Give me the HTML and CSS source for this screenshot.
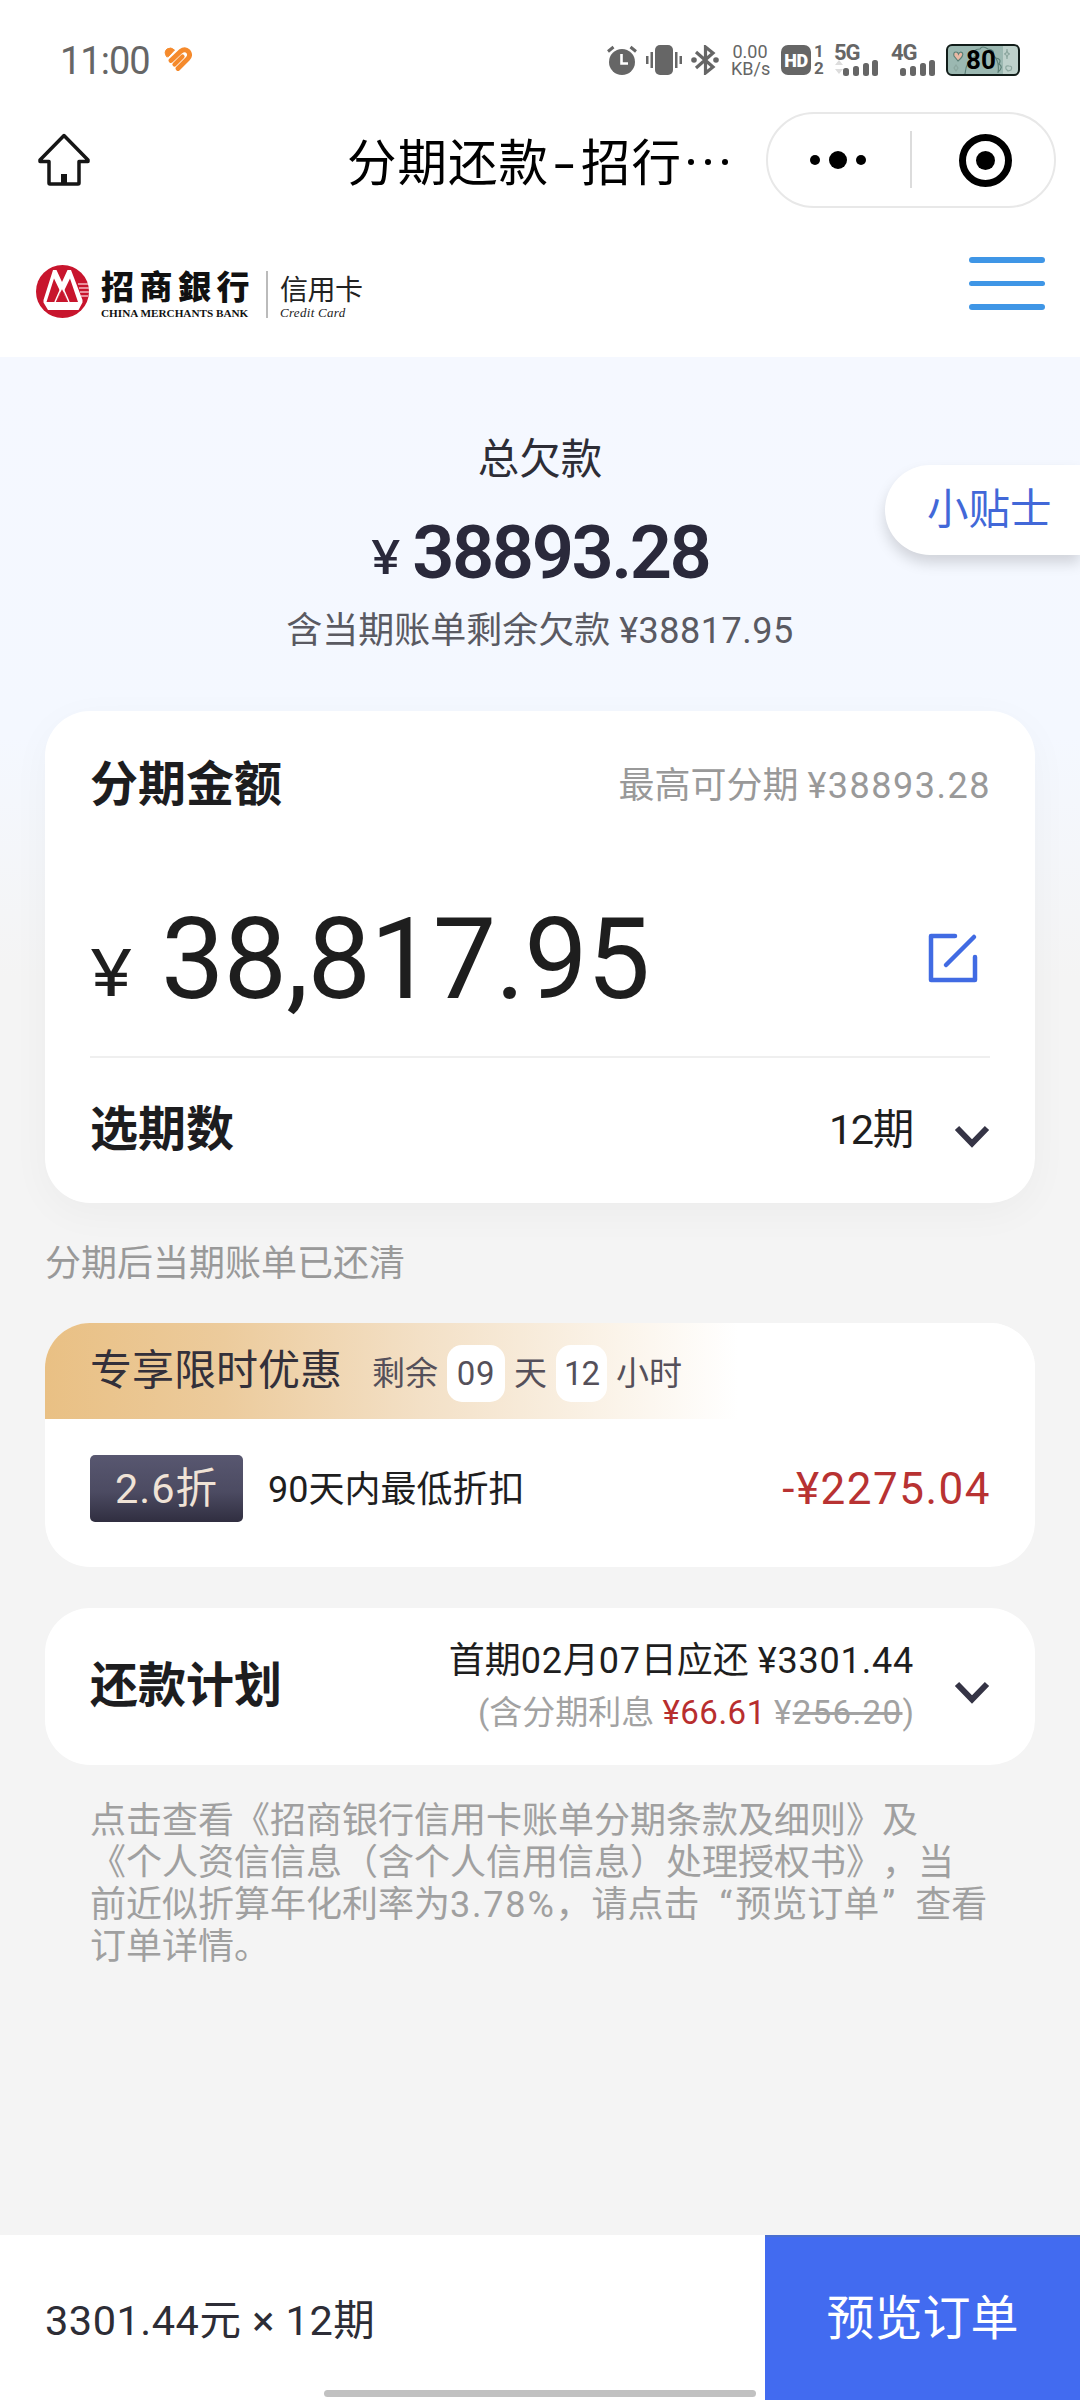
FILE: index.html
```html
<!DOCTYPE html>
<html lang="zh-CN">
<head>
<meta charset="utf-8">
<title>分期还款</title>
<link rel="stylesheet" href="styles.css">
</head>
<body>
<header class="top">
  <div class="status">
    <span class="clock">11:00</span>
    <svg class="heart" width="28" height="26" viewBox="0 0 28 26" fill="none" stroke="#f58a2c" stroke-linecap="round">
      <path d="M2.500 9.500 Q-.5 5 3 2 Q7 -.5 10.500 3 L4.500 9.500 Z" fill="#f58a2c" stroke-width="1" stroke-linejoin="round"/>
      <path d="M7 13.500 L16.500 4.500 Q21 1 24.300 4.500 Q27 8 24 11.500 L14 21.500" stroke-width="4.800" stroke-linejoin="round"/>
      <path d="M10.500 17.500 L18.500 9.500" stroke-width="4.200"/>
    </svg>
    <div class="indicators">
      <svg class="ind-alarm" width="30" height="30" viewBox="0 0 30 30" fill="none" stroke="#666">
        <circle cx="15" cy="17" r="13" fill="#666" stroke="none"/>
        <path d="M1 6.500 L6.500 2 M29 6.500 L23.500 2" stroke-width="3"/>
        <path d="M14.500 9 V18.500 H21" stroke="#fff" stroke-width="2.600"/>
      </svg>
      <svg class="ind-vibrate" width="36" height="30" viewBox="0 0 36 30" fill="#666">
        <rect x="9" y="0" width="18" height="30" rx="5"/>
        <rect x="4.500" y="7" width="2.500" height="16"/><rect x="0" y="11" width="2.500" height="8"/>
        <rect x="29" y="7" width="2.500" height="16"/><rect x="33.500" y="11" width="2.500" height="8"/>
      </svg>
      <svg class="ind-bt" width="28" height="30" viewBox="0 0 28 30" fill="none" stroke="#666" stroke-width="3.200">
        <path d="M5 7 L22 22 L14.500 28 V2 L22 8 L5 23"/>
        <circle cx="3" cy="15" r="2.800" fill="#666" stroke="none"/><circle cx="25" cy="15" r="2.800" fill="#666" stroke="none"/>
      </svg>
      <div class="speed"><span>0.00</span><span>KB/s</span></div>
      <div class="hd">HD</div>
      <div class="sims"><span>1</span><span>2</span></div>
      <div class="net net-5g"><span>5G</span>
        <svg width="44" height="18" viewBox="0 0 44 18" fill="#666"><path d="M1 6 L5 1 L9 6Z M1 10 L5 15 L9 10Z" fill="#ddd"/><rect x="9" y="9" width="6" height="8" rx="2.500"/><rect x="19" y="7" width="6" height="10" rx="2.500"/><rect x="29" y="4" width="6" height="13" rx="2.500"/><rect x="38" y="1" width="6" height="16" rx="2.500"/></svg>
      </div>
      <div class="net net-4g"><span>4G</span>
        <svg width="44" height="18" viewBox="0 0 44 18" fill="#666"><rect x="9" y="9" width="6" height="8" rx="2.500"/><rect x="19" y="7" width="6" height="10" rx="2.500"/><rect x="29" y="4" width="6" height="13" rx="2.500"/><rect x="38" y="1" width="6" height="16" rx="2.500"/></svg>
      </div>
      <div class="battery">
        <svg width="70" height="28" viewBox="0 0 70 28" fill="none" stroke="#5d8077" stroke-width="1.200">
          <path d="M10 15 L6 10 Q5 6 8 6 Q10 6 10.500 8 Q12 5 14.500 7 Q16 10 10 15Z" fill="#e9b9a5"/>
          <path d="M17 28 Q18 14 28 10 Q24 3 32 3 Q34 -1 40 3 Q47 4 45 9 Q52 15 50 27 M48 12 Q54 13 51 18 Q56 21 50 26"/>
          <path d="M59 3 Q59 8 62 8 Q59 8 59 13 Q59 8 56 8 Q59 8 59 3Z M8 19 L10 22 L8 25 L6 22Z M58 23 Q57 19 61 20 Q65 20 63 24 L60 25Z" stroke="#8ca79f"/>
        </svg>
        <span>80</span>
      </div>
    </div>
  </div>
  <nav class="titlebar">
    <svg class="home" width="54" height="54" viewBox="0 0 54 54" fill="none" stroke="#161616" stroke-width="3.500" stroke-linejoin="round">
      <path d="M27 2.500 L51 27 V28.500 H42 V50 Q42 51 41 51 H13 Q12 51 12 50 V28.500 H3 V27 Z"/>
      <rect x="24" y="41" width="6" height="10" fill="#161616" stroke="none"/>
    </svg>
    <h1 class="title">分期还款<span class="dash">-</span>招行<span class="dots"><i></i><i></i><i></i></span></h1>
    <div class="capsule">
      <svg width="286" height="92" viewBox="0 0 286 92">
        <circle cx="47" cy="46" r="5"/><circle cx="70" cy="46" r="9"/><circle cx="93" cy="46" r="5"/>
        <path d="M143 17 V74" stroke="#dcdcdc" stroke-width="2"/>
        <circle cx="217.500" cy="46.500" r="23" fill="none" stroke="#000" stroke-width="7"/><circle cx="217.500" cy="46.500" r="9.500"/>
      </svg>
    </div>
  </nav>
  <div class="brandbar">
    <svg class="emblem" width="53" height="53" viewBox="0 0 53 53">
      <circle cx="26.500" cy="26.500" r="26.500" fill="#c8152d"/>
      <path d="M17 5 H20.500 L26 17 L31.500 5 H35 L46.500 35 V37.500 L42.500 45 H12 L7.500 37.500 V35 Z" fill="#fff"/>
      <path d="M10.500 37 L18 13.500 L24.500 27 L20.500 37 Z M42 37 L34 13.500 L27.500 27 L31.500 37 Z M20.500 37 L26 24 L31.500 37 Z" fill="#c8152d"/>
      <path d="M19 37 L26 21 L33 37" fill="none" stroke="#fff" stroke-width="1.500"/>
      <path d="M42 19 H52 M43 23 H53 M44 27 H53 M45 31 H52" stroke="#f2b6be" stroke-width="1.300"/>
    </svg>
    <div class="bank"><span class="bank-cn">招商<span class="trad">銀</span>行</span><span class="bank-en">CHINA MERCHANTS BANK</span></div>
    <div class="brand-rule"></div>
    <div class="card-name"><span class="card-cn">信用卡</span><span class="card-en">Credit Card</span></div>
    <div class="menu"><i></i><i></i><i></i></div>
  </div>
</header>

<main class="page">
  <section class="summary">
    <p class="sum-label">总欠款</p>
    <p class="sum-total"><span class="sum-yen">¥</span><span class="sum-num">38893.28</span></p>
    <p class="sum-note">含当期账单剩余欠款 <span class="num">¥38817.95</span></p>
    <div class="tips">小贴士</div>
  </section>

  <section class="card amount-card">
    <div class="row amount-head"><h2>分期金额</h2><span class="limit">最高可分期 <span class="num">¥38893.28</span></span></div>
    <div class="row amount">
      <span class="amount-yen">¥</span><span class="amount-num">38,817.95</span>
      <svg class="edit" width="50" height="50" viewBox="0 0 50 50" fill="none" stroke="#416be3" stroke-width="4.500" stroke-linecap="round" stroke-linejoin="round">
        <path d="M27 3 H3 V47 H47 V24 M46 4 L18 32"/>
      </svg>
    </div>
    <div class="row period"><h2>选期数</h2><span class="period-value"><span class="num">12</span>期</span>
      <svg class="chev" width="36" height="26" viewBox="0 0 36 26" fill="none" stroke="#353445" stroke-width="6"><path d="M3 4 L18 19.500 L33 4"/></svg>
    </div>
  </section>

  <p class="hint">分期后当期账单已还清</p>

  <section class="card promo">
    <div class="promo-head"><span class="promo-title">专享限时优惠</span><span class="left">剩余</span><b class="box box-day">09</b><span class="day">天</span><b class="box box-hour">12</b><span class="hour">小时</span></div>
    <div class="promo-body"><span class="tag">2.6折</span><span class="promo-text">90天内最低折扣</span><span class="discount">-¥2275.04</span></div>
  </section>

  <section class="card plan">
    <h2>还款计划</h2>
    <div class="plan-info">
      <p class="first">首期<span class="num">02</span>月<span class="num">07</span>日应还 <span class="num">¥3301.44</span></p>
      <p class="interest">(含分期利息 <span class="red">¥66.61</span> <span class="was">¥<s>256.20</s></span>)</p>
    </div>
    <svg class="chev" width="36" height="26" viewBox="0 0 36 26" fill="none" stroke="#353445" stroke-width="6"><path d="M3 4 L18 19.500 L33 4"/></svg>
  </section>

  <p class="terms">点击查看《招商银行信用卡账单分期条款及细则》及<br>《个人资信信息（含个人信用信息）处理授权书》，当<br>前近似折算年化利率为<span class="num">3.78%</span>，请点击<span class="quote-open">“</span>预览订单<span class="quote-close">”</span>查看<br>订单详情。</p>
</main>

<footer class="footer">
  <span class="foot-sum">3301.44元 × 12期</span>
  <button class="submit">预览订单</button>
  <div class="gesture"></div>
</footer>
</body>
</html>
```

FILE: styles.css
```css
* { box-sizing: border-box; }
body {
  margin: 0;
  width: 1080px;
  height: 2400px;
  display: flex;
  flex-direction: column;
  overflow: hidden;
  background: #f4f4f4;
  color: #1e1e1e;
  font-family: Roboto, "Noto Sans CJK SC", sans-serif;
}
h1, h2, p { margin: 0; white-space: nowrap; }
svg { display: block; flex: none; }
span, b, i { white-space: nowrap; }

.top { height: 357px; background: #fff; }
.status { height: 112px; padding: 0 60px; display: flex; color: #666; }
.clock { width: 104px; margin-top: 38px; font: 38px/46px Roboto, sans-serif; letter-spacing: -1px; }
.heart { margin-top: 47px; }
.indicators { margin-left: auto; height: 31px; margin-top: 45px; display: flex; }
.ind-vibrate { margin-left: 9px; }
.ind-bt { margin-left: 9px; }
.speed { width: 38px; margin-left: 12px; display: flex; flex-direction: column; font-size: 18px; line-height: 17px; text-align: center; }
.speed span:first-child { margin-top: -2px; }
.hd { width: 30px; height: 30px; margin-left: 12px; border-radius: 7px; background: #666; color: #fff; font-weight: 900; font-size: 18px; line-height: 31px; text-align: center; letter-spacing: -.5px; }
.sims { margin-left: 3px; width: 10px; display: flex; flex-direction: column; font-weight: 700; font-size: 17px; line-height: 17px; margin-top: -2px; }
.net { width: 44px; margin-left: 10px; font-weight: 700; font-size: 22px; line-height: 15px; }
.net span { display: block; height: 14px; letter-spacing: -1px; }
.net-4g { margin-left: 13px; }
.battery { display: grid; place-items: center; width: 74px; height: 32px; margin-left: 11px; margin-top: -1px; border: 2px solid #111c19; border-radius: 6px; background: linear-gradient(90deg, #9bb8b1 0 78%, #bed1cb 78%); color: #000; overflow: hidden; }
.battery > * { grid-area: 1 / 1; }
.battery span { font: 700 26px/28px Roboto, sans-serif; margin-right: 4px; }

.titlebar { height: 96px; display: flex; padding-left: 37px; }
.home { margin-top: 21px; }
.title { margin-left: 256px; width: 419px; height: 96px; font-weight: 400; font-size: 49.500px; line-height: 104px; color: #000; display: flex; letter-spacing: 1px; }
.dash { width: 32px; text-align: center; transform: scaleX(1.5); }
.dots { display: flex; gap: 11px; align-items: center; margin-left: 6px; padding-top: 4px; }
.dots i { width: 6px; height: 6px; border-radius: 50%; background: #000; }
.capsule { width: 290px; height: 96px; border: 2px solid #e8e8e8; border-radius: 48px; }

.brandbar { height: 149px; display: flex; padding: 57px 35px 0 36px; }
.bank { width: 150px; margin-left: 12px; display: flex; flex-direction: column; }
.bank-cn { font-weight: 900; font-size: 33px; line-height: 46px; letter-spacing: 5.500px; color: #111; }
.trad { font-family: "Noto Sans CJK TC", sans-serif; line-height: 0; }
.bank-en { font: 700 11.200px/12px "Liberation Serif", serif; color: #111; margin-top: -4px; }
.brand-rule { width: 2px; height: 47px; margin: 6px 12px 0 15px; background: #bbb; }
.card-name { display: flex; flex-direction: column; color: #222; }
.card-cn { font-size: 28px; line-height: 42px; margin-top: 5px; letter-spacing: -.5px; }
.card-en { font: italic 13px/14px "Liberation Serif", serif; margin-top: -6px; letter-spacing: .3px; }
.menu { margin-left: auto; width: 76px; display: flex; flex-direction: column; gap: 18px; margin-top: -8px; }
.menu i { height: 5.500px; border-radius: 3px; background: #3f96e6; }

.page { flex: 1; background: linear-gradient(#f5f8ff 0, #f4f8ff 380px, #f4f4f4 620px); }
.summary { position: relative; height: 354px; text-align: center; padding-top: 72px; }
.sum-label { font-size: 41.500px; line-height: 62px; color: #2d2d36; }
.sum-total { height: 100px; color: #2a293b; display: flex; justify-content: center; gap: 14px; line-height: 104px; padding: 10px 0 0 2px; }
.sum-yen { font-family: Inter, sans-serif; font-weight: 500; font-size: 46px; line-height: 113px; transform: scaleX(1.15); }
.sum-num { font-weight: 600; font-size: 74px; letter-spacing: -2.500px; }
.sum-note { font-size: 36px; line-height: 54px; margin-top: 13px; color: #5a5a62; }
.sum-note .num { letter-spacing: .5px; }
.tips { position: absolute; right: 0; top: 108px; width: 195px; height: 90px; padding-left: 42px; border-radius: 45px 0 0 45px; background: #fff; box-shadow: 0 8px 14px rgba(0,0,0,.15); color: #4268d8; font-size: 41.500px; line-height: 89px; text-align: left; }

.card { margin: 0 45px; border-radius: 45px; background: #fff; overflow: hidden; }
h2 { font-size: 48px; font-weight: 700; line-height: 70px; color: #1d1d1f; }
.row { display: flex; }
.amount-card { height: 492px; padding: 0 45px; box-shadow: 0 10px 40px rgba(0,0,0,.035); }
.amount-head { height: 150px; padding-top: 39px; justify-content: space-between; }
.limit { font-size: 36px; line-height: 72px; color: #999; }
.limit .num { letter-spacing: 1.500px; margin-right: -1px; }
.amount { height: 197px; border-bottom: 2px solid #efefef; }
.amount-yen { width: 71px; font-family: Inter, sans-serif; font-size: 64px; line-height: 224px; transform: scaleX(1.2); transform-origin: left; }
.amount-num { font-size: 113px; line-height: 197px; letter-spacing: -.9px; }
.edit { margin: 72px 12px 0 auto; }
.period { padding-top: 37px; }
.period-value { margin-left: auto; width: 125px; font-size: 41.500px; line-height: 70px; }
.period-value .num { letter-spacing: -1.500px; }
.period .chev { margin-top: 29px; }

.hint { margin: 34px 45px 0; font-size: 36px; line-height: 54px; color: #999; }

.promo { margin-top: 32px; height: 244px; }
.promo-head { height: 96px; padding: 0 45px; display: flex; line-height: 96px; color: #55505a; font-size: 33px; background: linear-gradient(90deg, #e9c084 0, #eccb9c 18%, #f3e0c6 38%, #fbf4ea 58%, #fff 70%); }
.promo-title { width: 282px; font-size: 42px; line-height: 96px; color: #33303a; }
.left { width: 75px; line-height: 102px; }
.box { height: 57px; margin-top: 22px; border-radius: 15px; background: #fff; font-weight: 400; line-height: 58px; text-align: center; }
.box-day { width: 58px; letter-spacing: .6px; }
.box-hour { width: 51px; letter-spacing: -1px; }
.day { width: 51px; padding-left: 9px; line-height: 102px; }
.hour { padding-left: 9px; line-height: 102px; }
.promo-body { padding: 36px 45px 0; display: flex; line-height: 68px; }
.tag { width: 153px; height: 67px; border-radius: 5px; background: linear-gradient(#585770, #4c4b62 55%, #302e40); color: #f0e3d6; font-size: 41.500px; text-align: center; letter-spacing: 1px; }
.promo-text { margin-left: 25px; font-size: 36px; line-height: 70px; }
.discount { margin: 0 -1px 0 auto; font-size: 44px; color: #b83232; letter-spacing: 1.500px; }

.plan { margin-top: 41px; height: 157px; padding: 0 45px; display: flex; }
.plan h2 { margin-top: 43px; }
.plan-info { margin-left: auto; width: 500px; padding-top: 27px; text-align: right; }
.first { font-size: 36px; line-height: 53px; }
.first .num { letter-spacing: .8px; }
.interest { font-size: 33px; line-height: 50px; color: #a2a2a2; margin-top: 0; }
.red { color: #b82e2e; letter-spacing: .5px; }
.was { letter-spacing: 1.400px; }
.plan .chev { margin: 72px 0 0 40px; }
.terms { margin: 35px 90px 0; font-size: 36px; line-height: 42px; color: #a0a0a0; text-spacing-trim: space-all; }
.terms .num { letter-spacing: 1.800px; }
.quote-open { padding-left: 20px; padding-right: 3px; }
.quote-close { padding-left: 3px; padding-right: 20px; }

.footer { position: relative; height: 165px; display: flex; background: #fff; }
.foot-sum { padding-left: 45px; width: 765px; font-size: 41.500px; line-height: 172px; color: #2d2d36; letter-spacing: .5px; }
.submit { width: 315px; border: 0; border-top: 2px solid #4a6fd0; padding: 0; background: #426bf0; color: #fff; font-family: inherit; font-size: 48px; line-height: 163px; }
.gesture { position: absolute; left: 324px; bottom: 3px; width: 432px; height: 7px; border-radius: 4px; background: #c1c1c1; }
```
